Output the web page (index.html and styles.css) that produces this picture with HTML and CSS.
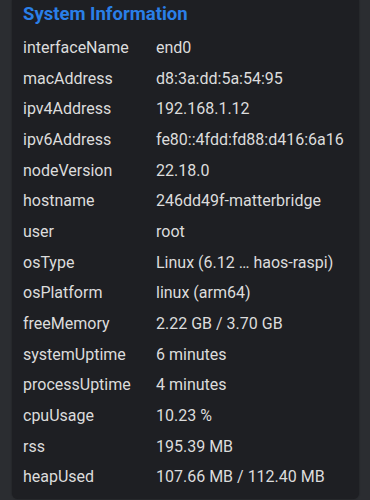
FILE: index.html
```html
<!DOCTYPE html>
<html>
	<head>
		<title>System Information</title>
		<meta charset="utf-8">
		<meta name="viewport" content="width=device-width, initial-scale=1">
		<link rel="stylesheet" href="styles.css">
	</head>
	<body>
		<div class="card">
			<h2 class="title">System Information</h2>
			<div class="rows">
				<div class="row"><span class="key">interfaceName</span><span class="val">end0</span></div>
				<div class="row"><span class="key">macAddress</span><span class="val">d8:3a:dd:5a:54:95</span></div>
				<div class="row"><span class="key">ipv4Address</span><span class="val">192.168.1.12</span></div>
				<div class="row"><span class="key">ipv6Address</span><span class="val">fe80::4fdd:fd88:d416:6a16</span></div>
				<div class="row"><span class="key">nodeVersion</span><span class="val">22.18.0</span></div>
				<div class="row"><span class="key">hostname</span><span class="val">246dd49f-matterbridge</span></div>
				<div class="row"><span class="key">user</span><span class="val">root</span></div>
				<div class="row"><span class="key">osType</span><span class="val">Linux (6.12 … haos-raspi)</span></div>
				<div class="row"><span class="key">osPlatform</span><span class="val">linux (arm64)</span></div>
				<div class="row"><span class="key">freeMemory</span><span class="val">2.22 GB / 3.70 GB</span></div>
				<div class="row"><span class="key">systemUptime</span><span class="val">6 minutes</span></div>
				<div class="row"><span class="key">processUptime</span><span class="val">4 minutes</span></div>
				<div class="row"><span class="key">cpuUsage</span><span class="val">10.23 %</span></div>
				<div class="row"><span class="key">rss</span><span class="val">195.39 MB</span></div>
				<div class="row"><span class="key">heapUsed</span><span class="val">107.66 MB / 112.40 MB</span></div>
			</div>
		</div>
	</body>
</html>
```
FILE: styles.css
```css
body {
	margin: 0;
	padding: 0 11px 0 12px;
	background: #2b2d31;
	font-family: Roboto, "Liberation Sans", sans-serif;
	height: 500px;
	overflow: hidden;
}
.card {
	background: #1e1f23;
	border-radius: 0 0 6px 6px;
	padding: 0 0 7px 11px;
	box-shadow: 0 0 2px rgba(0,0,0,.4);
}
.title {
	margin: 0;
	padding-top: 3px;
	color: #2a7fe8;
	font-size: 18.5px;
	font-weight: 700;
	line-height: 22px;
}
.rows {padding-top: 7px;}
.row {
	display: grid;
	grid-template-columns: 133px 1fr;
	height: 30.7px;
	align-items: center;
	font-size: 16px;
	color: #dcdcdc;
}
```
